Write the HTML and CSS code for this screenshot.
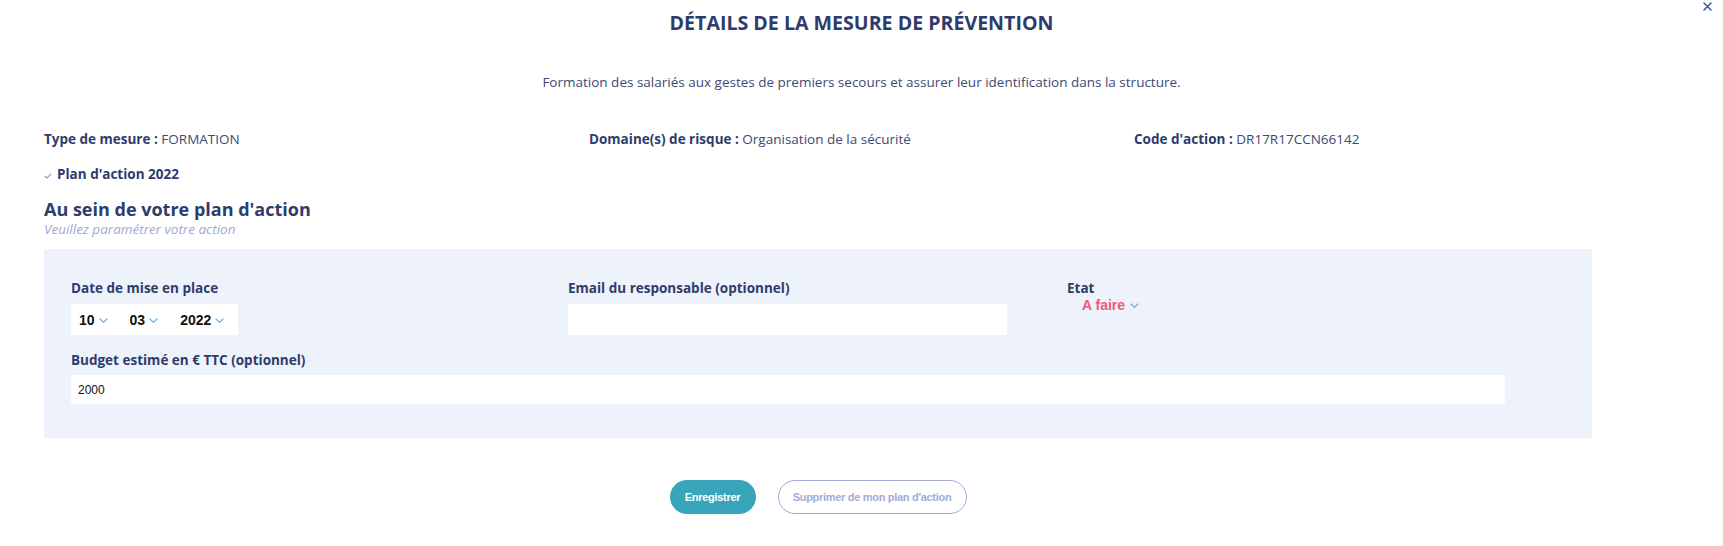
FILE: index.html
```html
<!DOCTYPE html>
<html lang="fr">
<head>
<meta charset="utf-8">
<title>Détails de la mesure de prévention</title>
<link rel="stylesheet" href="styles.css">
</head>
<body>
<div class="modal">
  <button class="close" type="button" aria-label="Fermer">
    <svg width="9" height="9" viewBox="0 0 9 9"><path d="M1 1L8 8M8 1L1 8" stroke="#3a5797" stroke-width="1.5" stroke-linecap="round"/></svg>
  </button>

  <h1 class="title">DÉTAILS DE LA MESURE DE PRÉVENTION</h1>
  <p class="desc">Formation des salariés aux gestes de premiers secours et assurer leur identification dans la structure.</p>

  <div class="meta">
    <div class="meta-item"><span class="meta-key">Type de mesure :</span> FORMATION</div>
    <div class="meta-item"><span class="meta-key">Domaine(s) de risque :</span> Organisation de la sécurité</div>
    <div class="meta-item"><span class="meta-key">Code d'action :</span> DR17R17CCN66142</div>
  </div>

  <div class="plan">
    <svg class="plan-check" width="8" height="6" viewBox="0 0 8 6"><path d="M0.8 2.8L3 5L7.2 0.8" fill="none" stroke="#8f98c6" stroke-width="1.1"/></svg>
    <span>Plan d'action 2022</span>
  </div>

  <h2 class="section-title">Au sein de votre plan d'action</h2>
  <p class="section-sub">Veuillez paramétrer votre action</p>

  <form class="panel">
    <div class="row-top">
      <div class="field">
        <label class="label">Date de mise en place</label>
        <div class="date-box">
          <span class="dsel">10<svg class="chev" width="9" height="5" viewBox="0 0 9 5"><path d="M0.6 0.6L4.5 4.3L8.4 0.6" fill="none" stroke="#4aa3f2" stroke-width="1.1"/></svg></span>
          <span class="dsel">03<svg class="chev" width="9" height="5" viewBox="0 0 9 5"><path d="M0.6 0.6L4.5 4.3L8.4 0.6" fill="none" stroke="#4aa3f2" stroke-width="1.1"/></svg></span>
          <span class="dsel">2022<svg class="chev" width="9" height="5" viewBox="0 0 9 5"><path d="M0.6 0.6L4.5 4.3L8.4 0.6" fill="none" stroke="#4aa3f2" stroke-width="1.1"/></svg></span>
        </div>
      </div>
      <div class="field">
        <label class="label" for="email">Email du responsable (optionnel)</label>
        <input class="input input-email" id="email" type="email">
      </div>
      <div class="field">
        <label class="label">Etat</label>
        <span class="state">A faire<svg class="chev" width="9" height="5" viewBox="0 0 9 5"><path d="M0.6 0.6L4.5 4.3L8.4 0.6" fill="none" stroke="#4aa3f2" stroke-width="1.1"/></svg></span>
      </div>
    </div>
    <div class="field field-budget">
      <label class="label" for="budget">Budget estimé en € TTC (optionnel)</label>
      <input class="input input-budget" id="budget" type="text" value="2000">
    </div>
  </form>

  <div class="actions">
    <button class="btn btn-primary" type="button">Enregistrer</button>
    <button class="btn btn-outline" type="button">Supprimer de mon plan d'action</button>
  </div>
</div>
</body>
</html>
```

FILE: styles.css
```css
* {
  box-sizing: border-box;
}

body {
  margin: 0;
  background: #ffffff;
  font-family: "Open Sans", "Noto Sans", sans-serif;
  color: #2f3d6b;
}

.modal {
  position: relative;
  padding: 10px 44px 30px;
}

.close {
  position: absolute;
  top: 2px;
  right: 11px;
  padding: 0;
  border: 0;
  background: none;
  line-height: 0;
  cursor: pointer;
}

.title {
  margin: 0;
  font-size: 19.6px;
  line-height: 26px;
  font-weight: 700;
  text-align: center;
  color: #2e3c6b;
}

.desc {
  margin: 37px 0 0;
  font-size: 13.5px;
  line-height: 18px;
  text-align: center;
  color: #3c4a74;
}

.meta {
  margin-top: 39px;
  display: grid;
  grid-template-columns: repeat(3, 1fr);
  font-size: 13.5px;
  line-height: 18px;
  color: #3c4a74;
}

.meta-key {
  font-weight: 700;
  color: #2e3c6b;
}

.plan {
  margin-top: 17px;
  display: flex;
  align-items: center;
  gap: 5px;
  font-size: 13.5px;
  line-height: 18px;
  font-weight: 700;
  color: #2e3c6b;
}

.plan-check {
  margin-top: 3px;
}

.section-title {
  margin: 16px 0 0;
  font-size: 18px;
  line-height: 21px;
  font-weight: 700;
  color: #2e3c6b;
}

.section-sub {
  margin: 1px 0 0;
  font-size: 13.5px;
  line-height: 16px;
  font-style: italic;
  color: #9ea8d9;
}

.panel {
  margin-top: 12px;
  width: 1548px;
  padding: 30px 27px 34px;
  background: #eef2fb;
}

.row-top {
  display: grid;
  grid-template-columns: 497px 499px auto;
}

.field {
  display: flex;
  flex-direction: column;
  align-items: flex-start;
}

.label {
  margin-bottom: 7px;
  font-size: 13.5px;
  line-height: 18px;
  font-weight: 700;
  color: #2e3c6b;
}

.date-box {
  display: flex;
  align-items: center;
  gap: 22px;
  width: 167px;
  height: 31px;
  padding-left: 8px;
  background: #ffffff;
}

.dsel {
  display: inline-flex;
  align-items: center;
  gap: 4px;
  font-family: "Liberation Sans", Arial, sans-serif;
  font-size: 14px;
  font-weight: 700;
  color: #111111;
}

.chev {
  display: block;
  margin-top: 1px;
}

.input {
  border: 0;
  outline: none;
  background: #ffffff;
  font-family: "Liberation Sans", Arial, sans-serif;
  font-size: 12px;
  color: #111111;
}

.input-email {
  width: 439px;
  height: 31px;
}

.field-budget {
  margin-top: 16px;
}

.field-budget .label {
  margin-bottom: 6px;
}

.input-budget {
  width: 1434px;
  height: 29px;
  padding: 0 7px;
}

.state {
  display: inline-flex;
  align-items: center;
  gap: 5px;
  margin: -7px 0 0 15px;
  font-family: "Liberation Sans", Arial, sans-serif;
  font-size: 14px;
  line-height: 16px;
  font-weight: 700;
  color: #f25876;
}

.actions {
  width: 1548px;
  margin-top: 42px;
  display: flex;
  justify-content: center;
  gap: 22px;
}

.btn {
  display: flex;
  align-items: center;
  justify-content: center;
  height: 34px;
  padding: 0;
  border-radius: 17px;
  font-family: "Liberation Sans", Arial, sans-serif;
  font-size: 11px;
  font-weight: 700;
  letter-spacing: -0.3px;
  white-space: nowrap;
  cursor: pointer;
}

.btn-primary {
  width: 86px;
  border: 0;
  background: #39a5bb;
  color: #ffffff;
}

.btn-outline {
  width: 189px;
  border: 1px solid #a3abd9;
  background: #ffffff;
  color: #a3abd9;
}
```
